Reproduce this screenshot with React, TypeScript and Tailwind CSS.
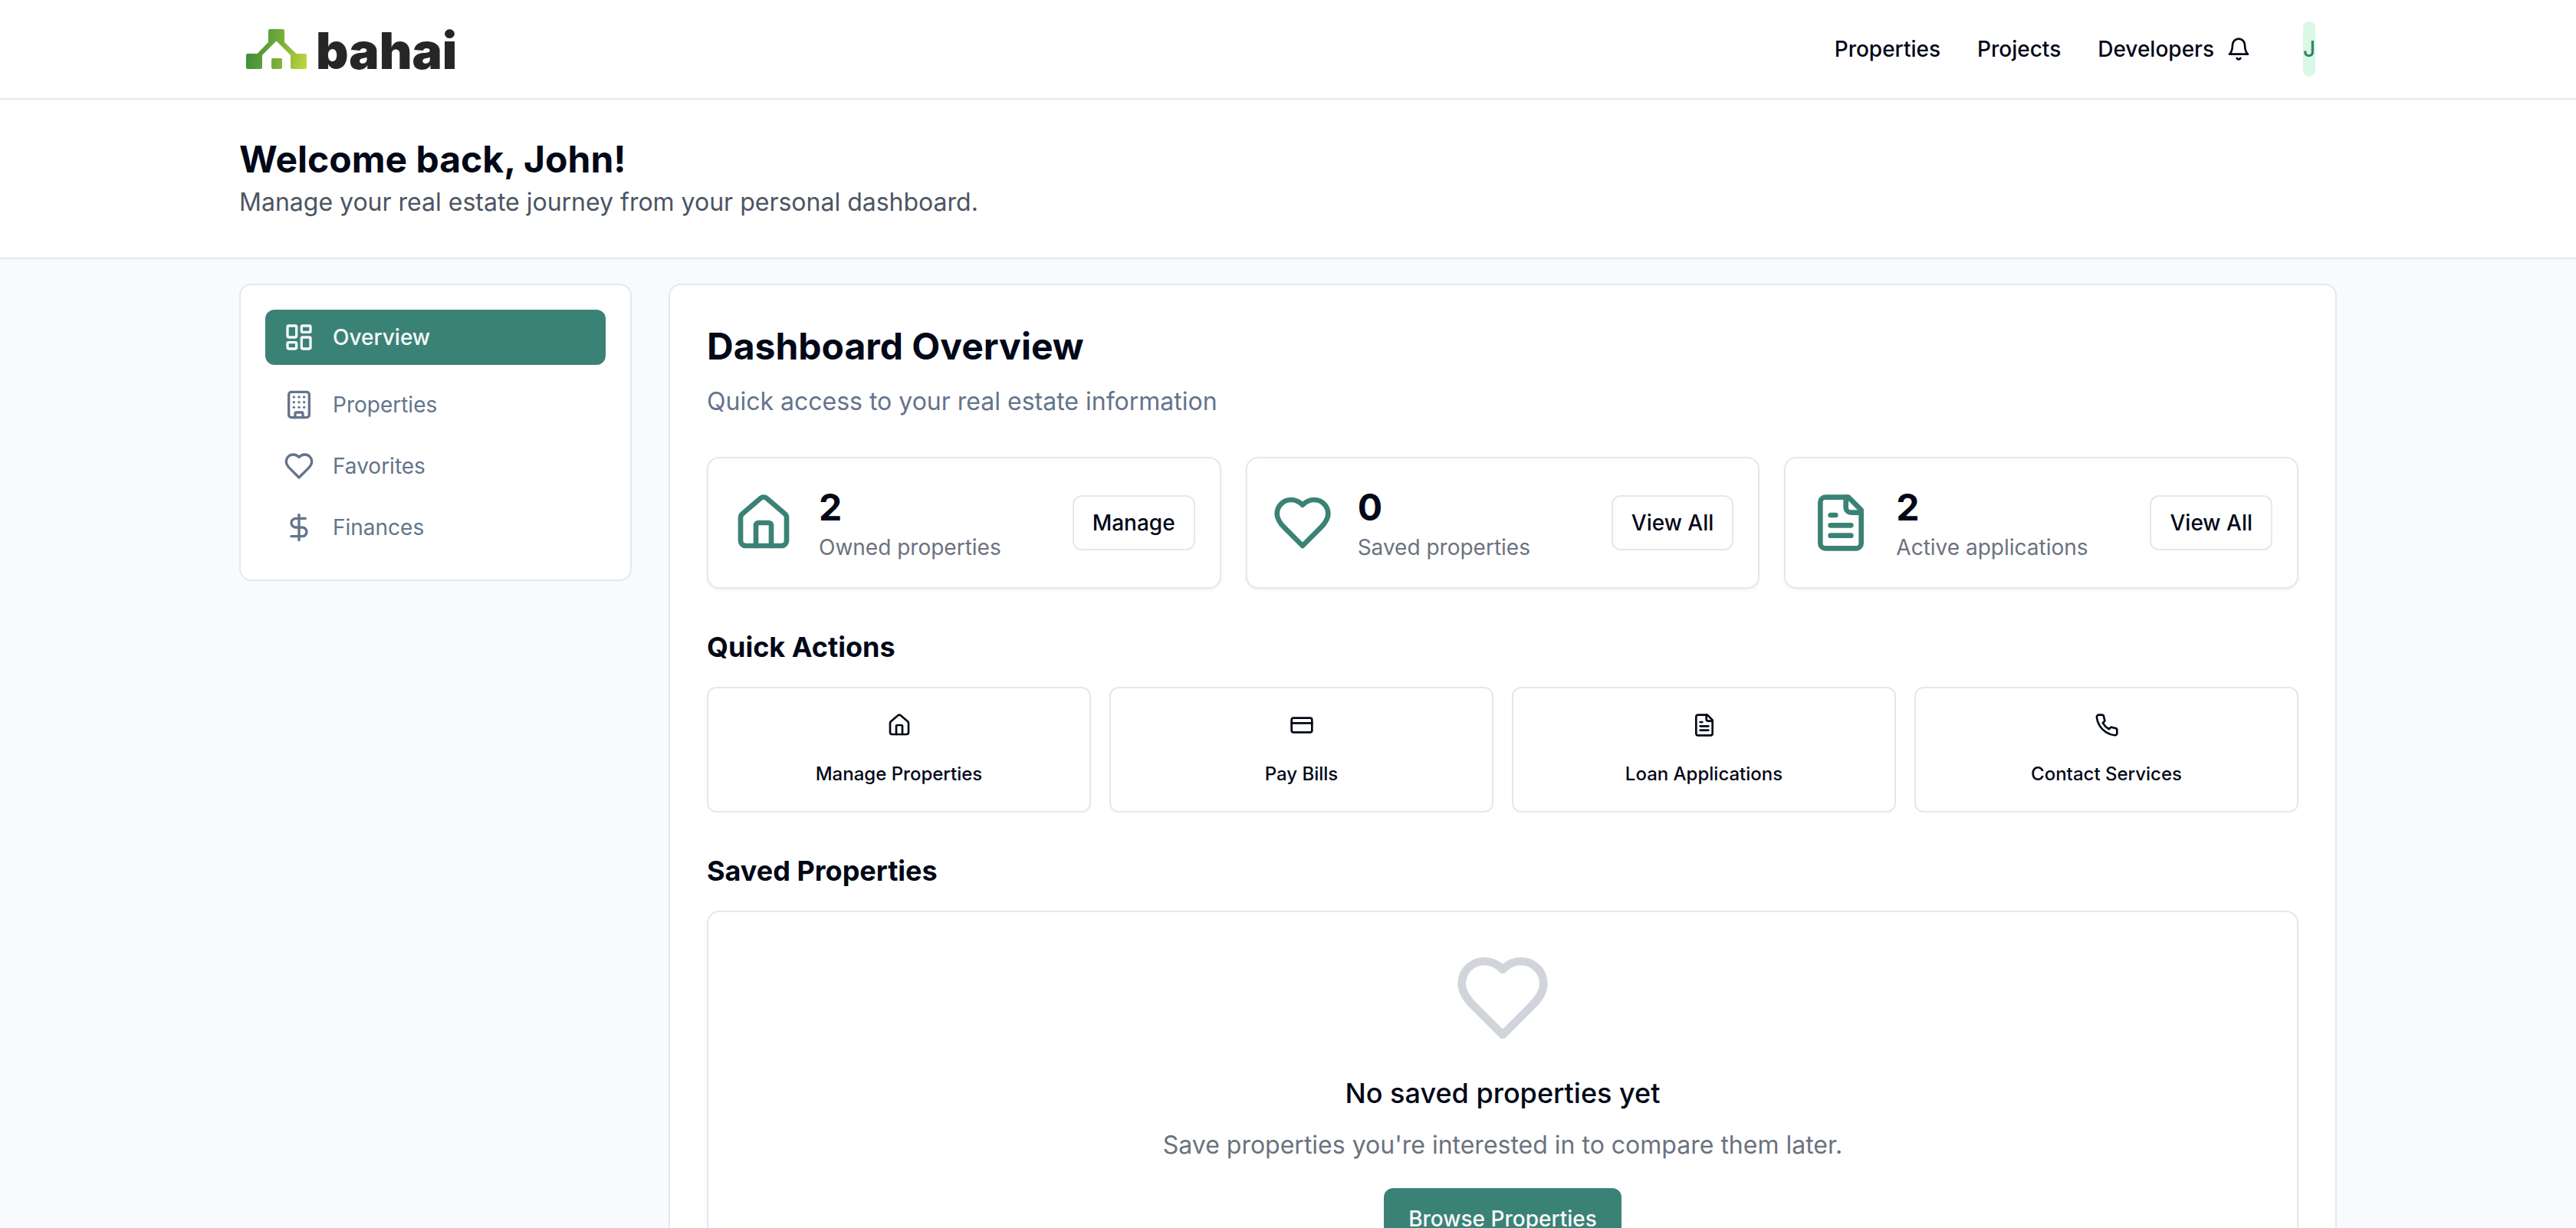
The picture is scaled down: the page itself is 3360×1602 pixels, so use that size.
import type { ReactNode } from "react";
import { Building, CreditCard, DollarSign, House, LayoutDashboard } from "lucide-react";

type IconProps = { className?: string };

function Outline({ className, children }: IconProps & { children: ReactNode }) {
  return (
    <svg
      viewBox="0 0 24 24"
      fill="none"
      stroke="currentColor"
      strokeWidth="2"
      strokeLinecap="round"
      strokeLinejoin="round"
      aria-hidden="true"
      className={className}
    >
      {children}
    </svg>
  );
}

function Heart({ className }: IconProps) {
  return (
    <Outline className={className}>
      <path d="M19 14c1.49-1.46 3-3.21 3-5.5A5.5 5.5 0 0 0 16.5 3c-1.76 0-3 .5-4.5 2-1.5-1.5-2.74-2-4.5-2A5.5 5.5 0 0 0 2 8.5c0 2.3 1.5 4.05 3 5.5l7 7Z" />
    </Outline>
  );
}

function Bell({ className }: IconProps) {
  return (
    <Outline className={className}>
      <path d="M6 8a6 6 0 0 1 12 0c0 7 3 9 3 9H3s3-2 3-9" />
      <path d="M10.3 21a1.94 1.94 0 0 0 3.4 0" />
    </Outline>
  );
}

function FileText({ className }: IconProps) {
  return (
    <Outline className={className}>
      <path d="M15 2H6a2 2 0 0 0-2 2v16a2 2 0 0 0 2 2h12a2 2 0 0 0 2-2V7Z" />
      <path d="M14 2v4a2 2 0 0 0 2 2h4" />
      <path d="M10 9H8" />
      <path d="M16 13H8" />
      <path d="M16 17H8" />
    </Outline>
  );
}

function Phone({ className }: IconProps) {
  return (
    <Outline className={className}>
      <path d="M22 16.92v3a2 2 0 0 1-2.18 2 19.79 19.79 0 0 1-8.63-3.07 19.5 19.5 0 0 1-6-6 19.79 19.79 0 0 1-3.07-8.67A2 2 0 0 1 4.11 2h3a2 2 0 0 1 2 1.72 12.84 12.84 0 0 0 .7 2.81 2 2 0 0 1-.45 2.11L8.09 9.91a16 16 0 0 0 6 6l1.27-1.27a2 2 0 0 1 2.11-.45 12.84 12.84 0 0 0 2.81.7A2 2 0 0 1 22 16.92z" />
    </Outline>
  );
}

function Logo() {
  return (
    <a href="#" className="flex items-center gap-3 pl-[9px]" aria-label="bahai">
      <svg viewBox="0 0 79 52" className="h-[52px] w-[79px]" aria-hidden="true">
        <defs>
          <linearGradient id="roof" gradientUnits="userSpaceOnUse" x1="0" y1="32" x2="76" y2="50">
            <stop offset="0" stopColor="#3a8f38" />
            <stop offset="0.5" stopColor="#76ab3b" />
            <stop offset="1" stopColor="#bdd43f" />
          </linearGradient>
        </defs>
        <path
          fill="url(#roof)"
          d="M31 0h17q2 0 2 2v15l15.5 15H77q2 0 2 2v16q0 2-2 2H60q-2 0-2-2V34L39.500 15.500 21 34v16q0 2-2 2H2q-2 0-2-2V34q0-2 2-2h12.500L29 17V2q0-2 2-2z"
        />
        <rect x="33" y="38" width="14" height="14" rx="2" fill="url(#roof)" />
      </svg>
      <span className="pt-1 text-[66px] leading-[64px] font-black text-[#262626]">bahai</span>
    </a>
  );
}

const navLinks = ["Properties", "Projects", "Developers"];

const sideLinks = [
  { label: "Properties", icon: Building },
  { label: "Favorites", icon: Heart },
  { label: "Finances", icon: DollarSign },
];

const stats = [
  { value: 2, label: "Owned properties", action: "Manage", icon: House },
  { value: 0, label: "Saved properties", action: "View All", icon: Heart },
  { value: 2, label: "Active applications", action: "View All", icon: FileText },
];

const quickActions = [
  { label: "Manage Properties", icon: House },
  { label: "Pay Bills", icon: CreditCard },
  { label: "Loan Applications", icon: FileText },
  { label: "Contact Services", icon: Phone },
];

export default function App() {
  return (
    <div className="min-h-screen bg-[#f8fafc] font-['Inter',sans-serif] text-[#020817]">
      <header className="border-b-2 border-[#e2e8f0] bg-white">
        <div className="mx-auto flex h-32 max-w-[2800px] items-center justify-between px-8">
          <Logo />
          <div className="flex items-center pr-7">
            <nav className="flex gap-12 text-[28px] leading-10 font-medium">
              {navLinks.map((label) => (
                <a key={label} href="#">
                  {label}
                </a>
              ))}
            </nav>
            <button type="button" aria-label="Notifications" className="ml-4">
              <Bell className="size-8" />
            </button>
            <button
              type="button"
              aria-label="Account"
              className="ml-[68px] flex h-[72px] w-4 items-center justify-center rounded-full bg-[#d9f8e5] text-[28px] font-medium text-[#358063]"
            >
              J
            </button>
          </div>
        </div>
      </header>

      <section className="border-b-2 border-[#e2e8f0] bg-white">
        <div className="mx-auto max-w-[2800px] px-8 py-12">
          <h1 className="text-5xl leading-[60px] font-bold">Welcome back, John!</h1>
          <p className="mt-0.5 text-[32px] leading-12 text-[#4b5563]">
            Manage your real estate journey from your personal dashboard.
          </p>
        </div>
      </section>

      <div className="mx-auto flex max-w-[2800px] items-start gap-12 px-8 py-8">
        <aside className="w-[512px] shrink-0 rounded-2xl border-2 border-[#e2e8f0] bg-white p-8">
          <nav className="text-[28px] leading-10">
            <a
              href="#"
              aria-current="page"
              className="mb-4 flex h-[72px] items-center gap-6 rounded-xl bg-[#3b8276] px-6 font-medium text-[#f8fafc]"
            >
              <LayoutDashboard className="size-10" />
              Overview
            </a>
            <div className="flex flex-col gap-2">
              {sideLinks.map(({ label, icon: Icon }) => (
                <a key={label} href="#" className="flex h-[72px] items-center gap-6 px-6 text-[#64748b]">
                  <Icon className="size-10" />
                  {label}
                </a>
              ))}
            </div>
          </nav>
        </aside>

        <main className="min-w-0 flex-1 rounded-2xl border-2 border-[#e2e8f0] bg-white p-12">
          <h2 className="text-5xl leading-[64px] font-bold">Dashboard Overview</h2>
          <p className="mt-4 text-[32px] leading-12 text-[#64748b]">
            Quick access to your real estate information
          </p>

          <div className="mt-12 grid grid-cols-3 gap-8">
            {stats.map(({ value, label, action, icon: Icon }) => (
              <div
                key={label}
                className="flex items-center gap-8 rounded-2xl border-2 border-[#e2e8f0] p-8 shadow-[0_2px_4px_rgba(0,0,0,0.05)]"
              >
                <Icon className="size-20 shrink-0 text-[#3b8276]" />
                <div className="flex-1">
                  <p className="text-5xl leading-[64px] font-bold">{value}</p>
                  <p className="text-[28px] leading-10 text-[#6b7280]">{label}</p>
                </div>
                <button
                  type="button"
                  className="h-[72px] rounded-xl border-2 border-[#e2e8f0] px-6 text-[28px] leading-10 font-medium"
                >
                  {action}
                </button>
              </div>
            ))}
          </div>

          <h3 className="mt-12 text-4xl leading-[56px] font-bold">Quick Actions</h3>
          <div className="mt-6 grid grid-cols-4 gap-6">
            {quickActions.map(({ label, icon: Icon }) => (
              <button
                key={label}
                type="button"
                className="flex flex-col items-center gap-8 rounded-xl border-2 border-[#e2e8f0] p-8 text-2xl leading-8 font-medium"
              >
                <Icon className="size-8" />
                {label}
              </button>
            ))}
          </div>

          <h3 className="mt-12 text-4xl leading-[56px] font-bold">Saved Properties</h3>
          <div className="mt-6 flex flex-col items-center rounded-2xl border-2 border-[#e2e8f0] p-12 text-center">
            <Heart className="size-32 text-[#d1d5db]" />
            <h4 className="mt-8 text-4xl leading-[56px] font-medium">No saved properties yet</h4>
            <p className="mt-4 text-[32px] leading-12 text-[#6b7280]">
              Save properties you're interested in to compare them later.
            </p>
            <button
              type="button"
              className="mt-8 h-20 rounded-xl bg-[#3b8276] px-8 text-[28px] leading-10 font-medium text-[#f8fafc]"
            >
              Browse Properties
            </button>
          </div>
        </main>
      </div>
    </div>
  );
}
